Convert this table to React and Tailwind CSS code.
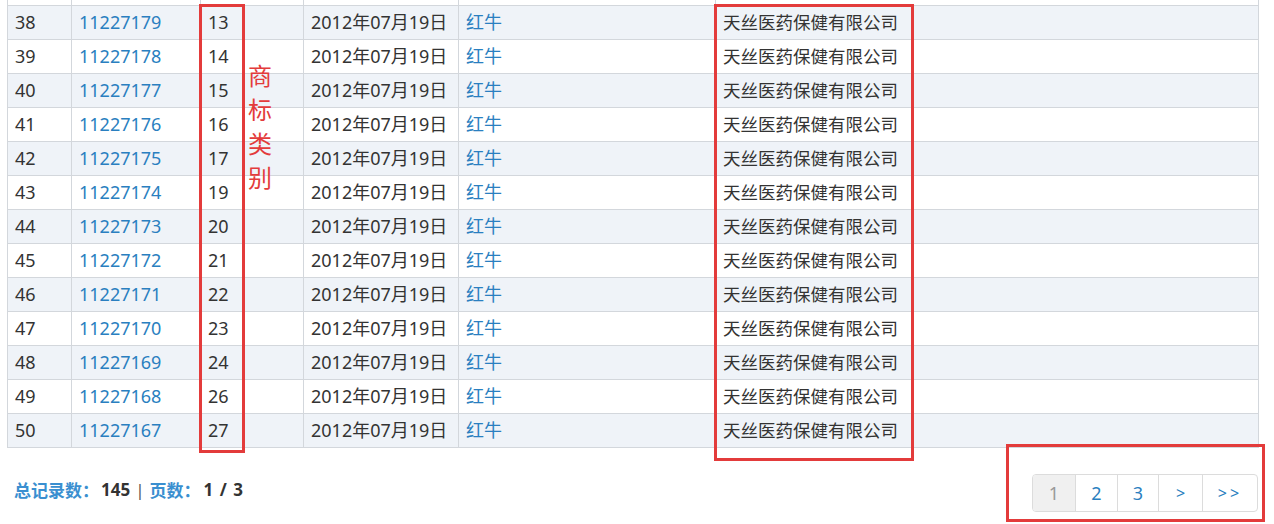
import React from "react";

const rows = [
  [38, "11227179", "13"],
  [39, "11227178", "14"],
  [40, "11227177", "15"],
  [41, "11227176", "16"],
  [42, "11227175", "17"],
  [43, "11227174", "19"],
  [44, "11227173", "20"],
  [45, "11227172", "21"],
  [46, "11227171", "22"],
  [47, "11227170", "23"],
  [48, "11227169", "24"],
  [49, "11227168", "26"],
  [50, "11227167", "27"],
];

const font = { fontFamily: '"Noto Sans", "Noto Sans CJK SC", sans-serif' };
const cjk = { fontFamily: '"Noto Sans CJK SC", sans-serif' };

export default function App() {
  return (
    <div className="relative w-[1274px] h-[524px] overflow-hidden bg-white text-[#333]" style={font}>
      <div className="pl-[7px] w-[1259px]">
        <table className="w-[1252px] border-collapse table-fixed text-[18px] leading-[33px]">
          <colgroup>
            <col className="w-[64px]" />
            <col className="w-[129px]" />
            <col className="w-[103px]" />
            <col className="w-[155px]" />
            <col className="w-[257px]" />
            <col />
          </colgroup>
          <tbody>
            <tr className="h-[5px]">
              {[0, 1, 2, 3, 4, 5].map((i) => (
                <td key={i} className="p-0 h-[5px] border-x border-[#d3d7dc] border-b"></td>
              ))}
            </tr>
            {rows.map(([n, id, cat]) => (
              <tr key={n} className={n % 2 === 0 ? "bg-[#eff3f8]" : "bg-white"}>
                <td className="h-[34px] px-[7px] py-0 border border-[#d3d7dc] whitespace-nowrap">{n}</td>
                <td className="h-[34px] px-[7px] py-0 border border-[#d3d7dc] whitespace-nowrap text-[#2a7fc0]">{id}</td>
                <td className="h-[34px] px-[7px] py-0 border border-[#d3d7dc] whitespace-nowrap">{cat}</td>
                <td className="h-[34px] px-[7px] py-0 border border-[#d3d7dc] whitespace-nowrap">2012年07月19日</td>
                <td className="h-[34px] px-[7px] py-0 border border-[#d3d7dc] whitespace-nowrap text-[#2a7fc0]">红牛</td>
                <td className="h-[34px] px-[7px] py-0 border border-[#d3d7dc] whitespace-nowrap text-[17.5px]">天丝医药保健有限公司</td>
              </tr>
            ))}
          </tbody>
        </table>
      </div>

      <div className="flex items-start justify-between pl-[14px] pr-[16px] mt-[26px]">
        <div className="mt-[5px] flex items-center text-[17px] font-bold leading-[22px] whitespace-nowrap">
          <span className="text-[#3a8fd0]" style={cjk}>总记录数：</span>
          <span className="text-[#333] ml-[2px]">145</span>
          <span className="text-[#555] font-normal mx-[5px]">|</span>
          <span className="text-[#3a8fd0]" style={cjk}>页数：</span>
          <span className="text-[#333] ml-[3px] tracking-[1px]">1 / 3</span>
        </div>
        <div className="flex h-[38px] border border-[#dcdcdc] rounded-[4px] overflow-hidden text-[18px] leading-[36px] text-[#2a7fc0]">
          <div className="w-[42px] text-center bg-[#f0f0f0] text-[#999]">1</div>
          <div className="w-[42px] text-center border-l border-[#dcdcdc]">2</div>
          <div className="w-[41px] text-center border-l border-[#dcdcdc]">3</div>
          <div className="w-[44px] text-center border-l border-[#dcdcdc] text-[16px]">&gt;</div>
          <div className="w-[55px] text-center border-l border-[#dcdcdc] text-[16px] tracking-[3px]">&gt;&gt;</div>
        </div>
      </div>

      {/* annotation overlays */}
      <div className="absolute left-[199px] top-[4px] w-[46px] h-[449px] border-[3px] border-[#e33b3b]"></div>
      <div className="absolute left-[714px] top-[4px] w-[200px] h-[457px] border-[3px] border-[#e33b3b]"></div>
      <div className="absolute left-[1006px] top-[444px] w-[259px] h-[78px] border-[3px] border-[#e33b3b]"></div>
      <div className="absolute left-[248px] top-[58px] w-[28px] flex flex-col text-[24px] leading-[34px] text-[#e33b3b]" style={cjk}>
        <span>商</span>
        <span>标</span>
        <span>类</span>
        <span>别</span>
      </div>
    </div>
  );
}
